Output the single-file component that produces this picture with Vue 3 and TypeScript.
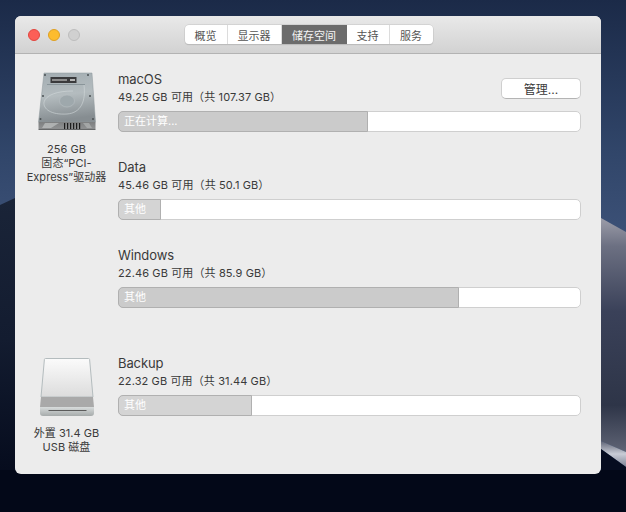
<template>
  <div class="desktop">
    <svg class="wallpaper" viewBox="0 0 626 512" preserveAspectRatio="none" aria-hidden="true">
      <defs>
        <linearGradient id="sky" x1="0" y1="0" x2="0" y2="1">
          <stop offset="0" stop-color="#1b2a48" />
          <stop offset="0.3" stop-color="#31466a" />
          <stop offset="0.45" stop-color="#3b5076" />
          <stop offset="1" stop-color="#3b5076" />
        </linearGradient>
        <linearGradient id="duneLeft" x1="0" y1="0" x2="0" y2="1">
          <stop offset="0" stop-color="#1a2438" />
          <stop offset="0.45" stop-color="#131c30" />
          <stop offset="1" stop-color="#020718" />
        </linearGradient>
        <linearGradient id="duneRight" x1="0" y1="0" x2="0" y2="1">
          <stop offset="0" stop-color="#9c9da9" />
          <stop offset="0.12" stop-color="#6c7082" />
          <stop offset="0.4" stop-color="#3a4159" />
          <stop offset="0.8" stop-color="#2e3548" />
          <stop offset="1" stop-color="#5f6475" />
        </linearGradient>
        <linearGradient id="streak" x1="0" y1="0" x2="0" y2="1">
          <stop offset="0" stop-color="#5f6475" />
          <stop offset="0.5" stop-color="#c9ccd6" />
          <stop offset="1" stop-color="#7d8294" />
        </linearGradient>
      </defs>
      <rect width="626" height="512" fill="url(#sky)" />
      <path d="M0 205 L15 198 L15 512 L0 512 Z" fill="url(#duneLeft)" />
      <path d="M601 218 L626 232 L626 452 L601 441 Z" fill="url(#duneRight)" />
      <path d="M601 441 L626 452 L626 467 L601 449 Z" fill="url(#streak)" />
      <path d="M0 470 H626 V512 H0 Z" fill="#030818" />
      <path d="M601 449 L626 467 L626 470 L601 470 Z" fill="#060c20" />
    </svg>

    <main class="window">
      <header class="titlebar">
        <div class="lights">
          <span class="light red"></span>
          <span class="light yellow"></span>
          <span class="light off"></span>
        </div>
        <nav class="tabs">
          <span
            v-for="tab in tabs"
            :key="tab.label"
            class="tab"
            :class="{ active: tab.label === activeTab }"
            :style="{ width: tab.width + 'px' }"
          >{{ tab.label }}</span>
        </nav>
      </header>

      <section class="disk">
        <div class="disk-side">
          <svg class="disk-icon" width="60" height="62" viewBox="0 0 60 62">
            <defs>
              <linearGradient id="hddBody" x1="0" y1="0" x2="0.15" y2="1">
                <stop offset="0" stop-color="#a3adb2" />
                <stop offset="0.5" stop-color="#b4bcbf" />
                <stop offset="1" stop-color="#868d91" />
              </linearGradient>
              <linearGradient id="hddBase" x1="0" y1="0" x2="0" y2="1">
                <stop offset="0" stop-color="#7d7f80" />
                <stop offset="0.8" stop-color="#8f9192" />
                <stop offset="1" stop-color="#555758" />
              </linearGradient>
            </defs>
            <path d="M7 2 H55 L58.5 51 H1.5 Z" fill="url(#hddBody)" stroke="#8f989c" stroke-width="0.5" />
            <path d="M1.5 51 H58.5 V59 H1.5 Z" fill="url(#hddBase)" />
            <path d="M8 52 H22 L14 57 H5 Z" fill="#c0c3c3" opacity="0.7" />
            <path d="M52 52 H46 L50 57 H55 Z" fill="#b0b3b3" opacity="0.7" />
            <g fill="#1d1d1d">
              <rect x="27" y="52" width="1.2" height="6" />
              <rect x="30" y="52" width="1.2" height="6" />
              <rect x="33" y="52" width="1.2" height="6" />
              <rect x="36" y="52" width="1.2" height="6" />
              <rect x="39" y="52" width="1.2" height="6" />
              <rect x="42" y="52" width="1.2" height="6" />
            </g>
            <rect x="13.5" y="6" width="26" height="6" fill="#3a3a3c" />
            <rect x="15" y="8" width="15" height="2" fill="#8c8c8c" />
            <rect x="33" y="8" width="5" height="2" fill="#b5b5b5" />
            <rect x="10" y="13" width="38" height="1" fill="#8a959a" />
            <path d="M47 14 C49 30 44 42 30 43 C14 44 6 38 7 31 C9 24 20 20 36 20" fill="none" stroke="#d2d8da" stroke-width="0.8" opacity="0.75" />
            <ellipse cx="30" cy="30" rx="7.5" ry="6" fill="#9ea8ac" stroke="#b8c0c3" stroke-width="0.6" />
            <g fill="#4a5053">
              <circle cx="8" cy="4" r="1" />
              <circle cx="51" cy="4" r="1" />
              <circle cx="6" cy="25" r="1" />
              <circle cx="53" cy="25" r="1" />
              <circle cx="3.5" cy="48" r="1" />
              <circle cx="56" cy="48" r="1" />
            </g>
          </svg>
          <p class="disk-label">256 GB<br />固态“PCI-<br />Express”驱动器</p>
        </div>
        <div class="volumes">
          <div v-for="vol in internalVolumes" :key="vol.name" class="volume">
            <div class="vol-head">
              <div>
                <div class="vol-name">{{ vol.name }}</div>
                <div class="vol-info">{{ vol.info }}</div>
              </div>
              <button v-if="vol.manage" class="manage">管理...</button>
            </div>
            <div class="bar">
              <div class="bar-fill" :class="{ dim: vol.dim }" :style="{ width: vol.used + 'px' }">{{ vol.label }}</div>
            </div>
          </div>
        </div>
      </section>

      <section class="disk disk-usb">
        <div class="disk-side">
          <svg class="disk-icon" width="56" height="60" viewBox="0 0 56 60">
            <defs>
              <linearGradient id="usbTop" x1="0" y1="0" x2="0" y2="1">
                <stop offset="0" stop-color="#fbfbfb" />
                <stop offset="1" stop-color="#dcdcdc" />
              </linearGradient>
              <linearGradient id="usbBase" x1="0" y1="0" x2="0" y2="1">
                <stop offset="0" stop-color="#d8dcdc" />
                <stop offset="1" stop-color="#a6abab" />
              </linearGradient>
            </defs>
            <path d="M6.5 1.5 H49.5 Q50.5 1.5 50.6 2.5 L54 40 H2 L5.4 2.5 Q5.5 1.5 6.5 1.5 Z" fill="url(#usbTop)" stroke="#b4bcbe" />
            <path d="M2 40 H54 L55 50 H1 Z" fill="#a9a9a9" />
            <path d="M1 50 H55 V56 Q55 59 52 59 H4 Q1 59 1 56 Z" fill="url(#usbBase)" />
            <rect x="9.5" y="53" width="38" height="1" fill="#5c5c5c" />
          </svg>
          <p class="disk-label">外置 31.4 GB<br />USB 磁盘</p>
        </div>
        <div class="volumes">
          <div class="volume">
            <div class="vol-head">
              <div>
                <div class="vol-name">Backup</div>
                <div class="vol-info">22.32 GB 可用（共 31.44 GB）</div>
              </div>
            </div>
            <div class="bar">
              <div class="bar-fill" :style="{ width: '134px' }">其他</div>
            </div>
          </div>
        </div>
      </section>
    </main>
  </div>
</template>

<script setup lang="ts">
const activeTab = '储存空间'

const tabs = [
  { label: '概览', width: 43 },
  { label: '显示器', width: 54 },
  { label: '储存空间', width: 65 },
  { label: '支持', width: 43 },
  { label: '服务', width: 43 },
]

const internalVolumes = [
  { name: 'macOS', info: '49.25 GB 可用（共 107.37 GB）', label: '正在计算...', used: 250, manage: true, dim: true },
  { name: 'Data', info: '45.46 GB 可用（共 50.1 GB）', label: '其他', used: 43, manage: false, dim: false },
  { name: 'Windows', info: '22.46 GB 可用（共 85.9 GB）', label: '其他', used: 341, manage: false, dim: true },
]
</script>

<style>
html,
body {
  margin: 0;
  background: #0a1226;
}
</style>

<style scoped>
.desktop {
  position: relative;
  width: 626px;
  height: 512px;
  overflow: hidden;
  padding: 16px 25px 38px 15px;
  box-sizing: border-box;
  font-family: Inter, "Noto Sans CJK SC", sans-serif;
  color: #333;
}

.wallpaper {
  position: absolute;
  inset: 0;
  width: 100%;
  height: 100%;
}

.window {
  position: relative;
  height: 458px;
  background: #ececec;
  border-radius: 6px;
  overflow: hidden;
}

.titlebar {
  display: flex;
  align-items: center;
  height: 38px;
  padding-left: 13px;
  box-sizing: border-box;
  background: linear-gradient(#e9e9e9, #d2d2d2);
  border-bottom: 1px solid #b3b3b3;
}

.lights {
  display: flex;
  gap: 8px;
  width: 156.5px;
}

.light {
  width: 12px;
  height: 12px;
  border-radius: 50%;
  box-sizing: border-box;
}

.red {
  background: #fc5f57;
  border: 1px solid #e2463f;
}

.yellow {
  background: #fdbc2e;
  border: 1px solid #dfa023;
}

.off {
  background: #d0d0d0;
  border: 1px solid #bdbdbd;
}

.tabs {
  display: flex;
  height: 19px;
  background: #fff;
  border-radius: 4px;
  box-shadow: 0 0 0 0.5px #c4c4c4, 0 1px 1px rgba(0, 0, 0, 0.18);
  overflow: hidden;
}

.tab {
  display: flex;
  align-items: center;
  justify-content: center;
  font-size: 11px;
  color: #555;
  border-right: 1px solid #dcdcdc;
  box-sizing: border-box;
}

.tab:last-child {
  border-right: 0;
}

.tab.active {
  background: #6c6c6c;
  color: #f4f4f4;
  border-right: 0;
}

.disk {
  display: flex;
  padding-top: 17px;
}

.disk-usb {
  padding-top: 20px;
}

.disk-side {
  width: 103px;
  flex-shrink: 0;
  display: flex;
  flex-direction: column;
  align-items: center;
}

.disk-icon {
  display: block;
}

.disk-label {
  margin: 9px 0 0;
  font-size: 11px;
  line-height: 14px;
  letter-spacing: 0.05px;
  text-align: center;
  white-space: nowrap;
  color: #3a3a3a;
}

.disk-usb .disk-icon {
  margin-top: 2px;
}

.volumes {
  width: 463px;
}

.volume {
  height: 88px;
}

.vol-head {
  display: flex;
  justify-content: space-between;
  height: 40px;
}

.vol-name {
  font-size: 13px;
  line-height: 16px;
  letter-spacing: -0.1px;
  color: #3a3a3a;
}

.vol-info {
  margin-top: 2px;
  font-size: 11px;
  line-height: 16px;
  letter-spacing: 0.12px;
  color: #3a3a3a;
}

.manage {
  width: 80px;
  height: 21px;
  margin-top: 7px;
  padding: 0;
  font: inherit;
  font-size: 12px;
  color: #3a3a3a;
  background: #fff;
  border: 1px solid #cfcfcf;
  border-bottom-color: #b4b4b4;
  border-radius: 5px;
}

.bar {
  height: 21px;
  background: #fff;
  border: 1px solid #cfcfcf;
  border-radius: 5px;
  box-sizing: border-box;
}

.bar-fill {
  height: 21px;
  margin: -1px 0 0 -1px;
  box-sizing: border-box;
  padding-left: 5px;
  font-size: 11px;
  line-height: 19px;
  color: #fff;
  background: #d4d4d4;
  border: 1px solid #b0b0b0;
  border-radius: 5px 0 0 5px;
  white-space: nowrap;
}

.bar-fill.dim {
  background: #cbcbcb;
}
</style>
